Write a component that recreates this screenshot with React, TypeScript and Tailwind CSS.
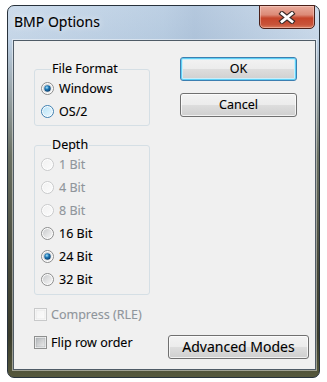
import React from "react";

type RadioProps = { checked?: boolean; disabled?: boolean; hover?: boolean; id: string };

function Radio({ checked, disabled, hover, id }: RadioProps) {
  const stroke = disabled ? "#c8c9ca" : hover ? "#3c7fb1" : "#8b8c8c";
  return (
    <svg width="13" height="13" viewBox="0 0 13 13" className="shrink-0">
      <defs>
        <linearGradient id={`rf-${id}`} x1="0" y1="0" x2="1" y2="1">
          {disabled ? (
            <>
              <stop offset="0" stopColor="#f1f1f1" />
              <stop offset="1" stopColor="#fbfbfb" />
            </>
          ) : hover ? (
            <>
              <stop offset="0" stopColor="#b9e3f7" />
              <stop offset="1" stopColor="#e9f7fe" />
            </>
          ) : (
            <>
              <stop offset="0" stopColor="#c9cbcd" />
              <stop offset="1" stopColor="#f7f7f7" />
            </>
          )}
        </linearGradient>
        <radialGradient id={`rd-${id}`} cx="0.4" cy="0.35" r="0.7">
          <stop offset="0" stopColor="#a6e3fb" />
          <stop offset="0.45" stopColor="#1a74b3" />
          <stop offset="1" stopColor="#0b3a66" />
        </radialGradient>
      </defs>
      <circle cx="6.5" cy="6.5" r="6" fill="#fefefe" stroke={stroke} strokeWidth="1" />
      <circle cx="6.5" cy="6.5" r="4.6" fill={`url(#rf-${id})`} />
      {checked && <circle cx="6.5" cy="6.5" r="3.2" fill={`url(#rd-${id})`} />}
    </svg>
  );
}

function Check({ disabled, id }: { disabled?: boolean; id: string }) {
  return (
    <svg width="13" height="13" viewBox="0 0 13 13" className="shrink-0">
      <defs>
        <linearGradient id={`cf-${id}`} x1="0" y1="0" x2="1" y2="1">
          {disabled ? (
            <>
              <stop offset="0" stopColor="#f3f3f3" />
              <stop offset="1" stopColor="#fbfbfb" />
            </>
          ) : (
            <>
              <stop offset="0" stopColor="#b4b7ba" />
              <stop offset="1" stopColor="#ececec" />
            </>
          )}
        </linearGradient>
      </defs>
      <rect x="0.5" y="0.5" width="12" height="12" fill="#fdfdfd" stroke={disabled ? "#c8c9ca" : "#8e8f8f"} />
      <rect x="2" y="2" width="9" height="9" fill={`url(#cf-${id})`} stroke={disabled ? "#e2e2e2" : "#a9adb1"} strokeWidth="0.6" />
    </svg>
  );
}

function RadioRow({ label, checked, disabled, hover, id }: { label: string } & RadioProps) {
  return (
    <div className="h-[23px] flex items-center gap-[5px]">
      <Radio checked={checked} disabled={disabled} hover={hover} id={id} />
      <span className={disabled ? "text-[#8f959b]" : "text-black"}>{label}</span>
    </div>
  );
}

const btn =
  "h-[24px] rounded-[3px] border flex items-center justify-center text-black bg-[linear-gradient(180deg,#f3f3f3_0%,#ececec_48%,#dddddd_52%,#cfcfcf_100%)]";

export default function App() {
  return (
    <div className="w-[327px] h-[382px] bg-white overflow-hidden pt-[5px] pl-[7px] font-['Noto_Sans',sans-serif] text-[12.5px] leading-[16px] [-webkit-text-stroke:0.1px_currentColor]">
      <div className="w-[313px] h-[373px] rounded-[7px] border border-[#28323c] flex flex-col bg-[linear-gradient(180deg,#c6d7e9_0px,#bccfe3_36px,#9eaab0_80px,#6a7062_150px,#47493a_260px,#3a3c2c_330px,#56583c_100%)]">
        <div className="h-[34px] shrink-0 flex items-start justify-between rounded-t-[6px] bg-[linear-gradient(90deg,rgba(255,255,255,0.12)_0%,rgba(160,185,210,0.25)_50%,rgba(140,165,195,0.3)_60%,rgba(255,255,255,0.15)_100%)]">
          <div className="pl-[6px] pt-[7px] text-[14px] leading-[18px] text-black [text-shadow:0_0_6px_rgba(255,255,255,0.9)]">
            BMP Options
          </div>
          <div className="-mt-px mr-[4px] w-[56px] h-[24px] rounded-b-[5px] border border-[#4a2019] flex items-center justify-center bg-[linear-gradient(180deg,#e9ab9c_0%,#dc8a77_40%,#c5442a_55%,#c8543a_85%,#d97d5e_100%)] shadow-[inset_0_0_0_1px_rgba(255,220,210,0.45)]">
            <svg width="18" height="13" viewBox="0 0 18 13">
              <path d="M4 2.5 L14 10.5 M14 2.5 L4 10.5" stroke="#3a2a28" strokeWidth="5" strokeLinecap="square" />
              <path d="M4 2.5 L14 10.5 M14 2.5 L4 10.5" stroke="#ffffff" strokeWidth="2.8" strokeLinecap="square" />
            </svg>
          </div>
        </div>
        <div className="ml-[5px] mr-[3px] mb-[7px] flex-1 border border-[#4f5b66] shadow-[0_0_0_1px_rgba(255,255,255,0.45)] bg-[#f0f0f0] flex flex-col pl-[20px] pr-[6px] pt-[16px]">
          <div className="flex items-start">
            <div className="w-[116px] mt-[4px] flex flex-col">
              <fieldset className="border border-[#d5dfe5] rounded-[3px] pl-[6px] pb-[2px] min-w-0">
                <legend className="ml-[10px] px-[1px] leading-[16px] text-black">File Format</legend>
                <RadioRow id="w" label="Windows" checked />
                <RadioRow id="o" label="OS/2" hover />
              </fieldset>
              <fieldset className="mt-[11px] border border-[#d5dfe5] rounded-[3px] pl-[6px] pb-[3px] min-w-0">
                <legend className="ml-[10px] px-[1px] leading-[16px] text-black">Depth</legend>
                <RadioRow id="b1" label="1 Bit" disabled />
                <RadioRow id="b4" label="4 Bit" disabled />
                <RadioRow id="b8" label="8 Bit" disabled />
                <RadioRow id="b16" label="16 Bit" />
                <RadioRow id="b24" label="24 Bit" checked />
                <RadioRow id="b32" label="32 Bit" />
              </fieldset>
            </div>
            <div className="ml-[30px] w-[117px] flex flex-col gap-[12px]">
              <div className={`${btn} border-[#3c7fb1] shadow-[inset_0_0_0_1px_#5fd0f5,inset_0_0_0_2px_#c9eefb]`}>OK</div>
              <div className={`${btn} border-[#707070] shadow-[inset_0_0_0_1px_rgba(255,255,255,0.7)]`}>Cancel</div>
            </div>
          </div>
          <div className="mt-[8px] h-[23px] flex items-center gap-[4px]">
            <Check id="c1" disabled />
            <span className="text-[#8f959b]">Compress (RLE)</span>
          </div>
          <div className="mt-[5px] flex items-start justify-between">
            <div className="h-[23px] flex items-center gap-[4px]">
              <Check id="c2" />
              <span className="text-black">Flip row order</span>
            </div>
            <div className={`${btn} mt-[4px] w-[141px] text-[14px] border-[#707070] shadow-[inset_0_0_0_1px_rgba(255,255,255,0.7)]`}>
              Advanced Modes
            </div>
          </div>
        </div>
      </div>
    </div>
  );
}
